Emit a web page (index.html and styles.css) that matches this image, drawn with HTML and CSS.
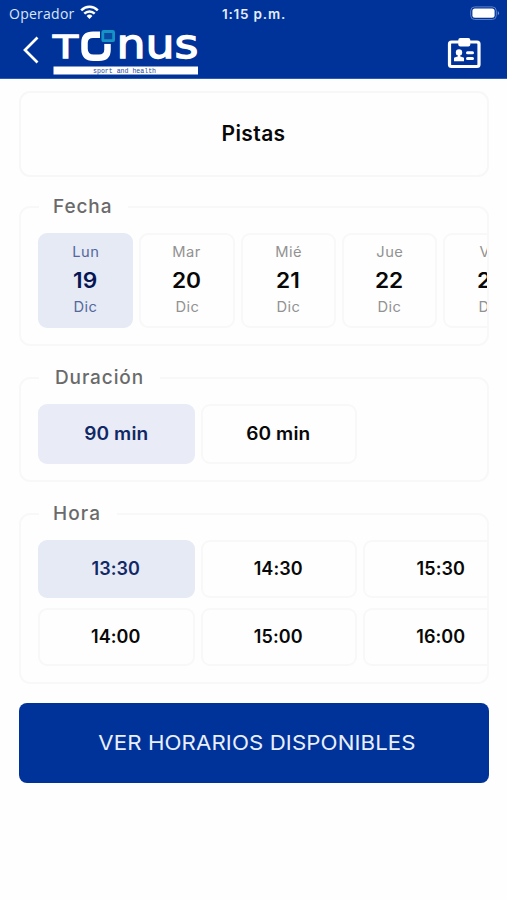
FILE: index.html
```html
<!DOCTYPE html>
<html lang="es">
<head>
<meta charset="utf-8">
<title>Pistas</title>
<link rel="stylesheet" href="styles.css">
</head>
<body>
<header class="header">
  <div class="status">
    <div class="carrier"><span>Operador</span>
      <svg width="19" height="15" viewBox="0 0 19 15" fill="none" stroke="#fff" stroke-width="2.500"><path d="M1.200 5.400C6 .6 13 .6 17.800 5.400"/><path d="M4.300 8.700c3-2.900 7.400-2.900 10.400 0"/><path d="M6.600 11a4.200 4.200 0 0 1 5.800 0L9.500 14z" fill="#fff" stroke="none"/></svg>
    </div>
    <div class="clock">1:15 p.m.</div>
    <svg class="battery" width="30" height="15" viewBox="0 0 30 15"><rect x=".7" y=".9" width="25.600" height="12.600" rx="4" fill="none" stroke="#5f7fc5"/><rect x="2.400" y="2.600" width="22.200" height="9.200" rx="2.500" fill="#fff"/><path d="M27.800 5q2.300 2.200 0 4.400z" fill="#7f98d2"/></svg>
  </div>
  <div class="nav">
    <svg class="back" width="18" height="28" viewBox="0 0 18 28" fill="none" stroke="#fff" stroke-width="2.700"><path d="M15.500 1.500 3 14l12.500 12.500"/></svg>
    <svg class="logo" width="148" height="47" viewBox="51 29 148 47">
      <text class="word" x="53" y="58" font-size="32" textLength="25" lengthAdjust="spacingAndGlyphs">T</text>
      <path d="M101 34.800H93q-8.500 0-8.500 8v6q0 9 9 9h5.500q8.500 0 8.500-8v-6" fill="none" stroke="#fff" stroke-width="6.500"/>
      <rect x="100" y="29" width="16" height="14.800" rx="2" fill="#00339a"/>
      <rect x="102.800" y="31.500" width="10.800" height="9.200" rx=".8" fill="#0a4aa5" stroke="#1593c4" stroke-width="2.800"/>
      <text class="word" x="116.500" y="58" font-size="40" textLength="82" lengthAdjust="spacingAndGlyphs">nus</text>
      <rect x="53.500" y="66.500" width="144.500" height="8" fill="#fff"/>
      <text class="tag" x="93" y="73" textLength="63" lengthAdjust="spacingAndGlyphs">sport and health</text>
    </svg>
    <svg class="badge" width="34" height="32" viewBox="0 0 34 32"><rect x="2.500" y="5" width="29.500" height="24.500" rx="2" fill="none" stroke="#fff" stroke-width="3.200"/><rect x="11.300" y="1" width="12" height="8.500" rx="2" fill="#fff"/><circle cx="12" cy="15.500" r="3.200" fill="#fff"/><path d="M11 17h2v2.300l4 1.500v3.500H7v-3.500l4-1.500z" fill="#fff"/><path d="M20.500 15.700H25.500M20.500 21.500H25.500" stroke="#fff" stroke-width="3" stroke-linecap="round"/></svg>
  </div>
</header>
<main class="content">
  <section class="title">Pistas</section>
  <section class="group dates">
    <h2 class="legend">Fecha</h2>
    <div class="row">
      <div class="day selected"><span>Lun</span><b>19</b><span>Dic</span></div>
      <div class="day"><span>Mar</span><b>20</b><span>Dic</span></div>
      <div class="day"><span>Mié</span><b>21</b><span>Dic</span></div>
      <div class="day"><span>Jue</span><b>22</b><span>Dic</span></div>
      <div class="day"><span>Vie</span><b>23</b><span>Dic</span></div>
    </div>
  </section>
  <section class="group durations">
    <h2 class="legend">Duración</h2>
    <div class="row">
      <div class="slot selected pale"><span>90 min</span></div>
      <div class="slot"><span>60 min</span></div>
    </div>
  </section>
  <section class="group hours">
    <h2 class="legend">Hora</h2>
    <div class="grid">
      <div class="slot selected">13:30</div><div class="slot">14:30</div><div class="slot">15:30</div>
      <div class="slot">14:00</div><div class="slot">15:00</div><div class="slot">16:00</div>
    </div>
  </section>
  <button class="submit"><span>VER HORARIOS DISPONIBLES</span></button>
</main>
</body>
</html>
```
FILE: styles.css
```css
* { box-sizing: border-box; }
body { margin: 0; height: 900px; overflow: hidden; background: #fefefe; font-family: Inter, "Liberation Sans", sans-serif; color: #080808; }
.header { height: 79px; background: #00339a; border-bottom: 1px solid #2c5bb4; color: #fff; }
.status { height: 28px; display: grid; grid-template-columns: 1fr auto 1fr; align-items: center; padding: 0 7px 0 9px; }
.carrier { display: flex; align-items: center; gap: 5px; font: 14px "Open Sans", sans-serif; letter-spacing: .25px; color: #dce5f6; }
.carrier span { margin-top: -2px; }
.carrier svg { margin-top: -3px; }
.clock { font-size: 13.500px; font-weight: 600; letter-spacing: .8px; color: #e6edfb; margin-left: -1px; }
.battery { justify-self: end; margin-top: -2px; }
.nav { height: 50px; display: flex; align-items: flex-start; padding: 1px 26px 0 22px; }
.back { margin-top: 7px; }
.logo { margin-left: 11px; }
.badge { margin: 8px 0 0 auto; }
.word { font-family: "DejaVu Sans", sans-serif; fill: #fff; stroke: #fff; stroke-width: 1.300px; }
.tag { font: 8px "Liberation Mono", monospace; fill: #1c479f; }
.content { padding: 12px 18px 0 19px; }
.title { height: 86px; border: 2px solid #f7f7f7; border-radius: 11px; background: #fefefe; display: flex; align-items: center; justify-content: center; font-size: 21px; font-weight: 600; letter-spacing: .4px; padding: 0 1px 2px 0; }
.group { border: 2px solid #f8f8f8; border-radius: 11px; background: #fefefe; padding-left: 17px; }
.dates { height: 140px; margin-top: 29px; }
.durations { height: 105px; margin-top: 31px; }
.hours { height: 171px; margin-top: 31px; }
.legend { width: max-content; height: 28px; margin: -15px 0 0 1px; padding: 0 16px 0 14px; background: #fefefe; font-size: 19px; line-height: 28px; font-weight: 500; letter-spacing: .9px; color: #6a6a6a; }
.hours .legend { letter-spacing: 1.100px; }
.durations .legend { padding-left: 16px; }
.row { display: flex; gap: 6px; margin-top: 12px; overflow: hidden; }
.day { flex: 0 0 95.300px; height: 95px; border: 2px solid #f8f8f8; border-radius: 9px; display: flex; flex-direction: column; align-items: center; padding: 8px 0 0; font-size: 14px; line-height: 18px; letter-spacing: .4px; color: #929292; }
.day span { transform: scaleX(1.050); }
.day b { font-size: 21px; line-height: 36px; font-weight: 600; color: #080808; letter-spacing: 0; margin-top: 2px; transform: scaleX(1.080); }
.day b + span { margin-top: -1px; }
.slot { flex: 0 0 156.500px; height: 60px; border: 2px solid #f8f8f8; border-radius: 9px; display: flex; align-items: center; justify-content: center; font-size: 18px; font-weight: 600; letter-spacing: .1px; padding: 0 1px 1px 0; }
.slot span { transform: scaleX(1.060); }
.grid { display: grid; grid-template-columns: repeat(3, 156.500px); grid-auto-rows: 58px; gap: 10px 6px; margin-top: 12px; overflow: hidden; }
.grid .slot { height: 58px; padding-bottom: 2px; }
.selected { background: #e5eaf5; border-color: #e5eaf5; color: #122866; }
.selected.pale { background: #e9ecf6; border-color: #e9ecf6; }
.day.selected { color: #53679c; }
.day.selected b { color: #061653; }
.submit { display: block; width: 100%; height: 80px; margin-top: 19px; padding: 0 0 0 5px; border: 0; border-radius: 8px; background: #00339a; color: #e9effb; font: 20px Inter, sans-serif; letter-spacing: .1px; }
.submit span { display: inline-block; transform: scaleX(1.110); }
```
